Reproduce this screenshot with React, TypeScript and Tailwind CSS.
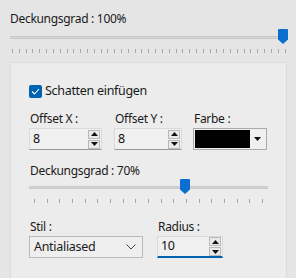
import React from "react";

function Ticks({ count }: { count: number }) {
  return (
    <div className="flex justify-between">
      {Array.from({ length: count }).map((_, i) => (
        <div key={i} className="w-px h-[4px] bg-[#a8a8a8]" />
      ))}
    </div>
  );
}

function Thumb() {
  return (
    <svg width="10" height="15" viewBox="0 0 10 15" className="block">
      <path d="M0 1 Q0 0 1 0 H9 Q10 0 10 1 V10.5 L5 15 L0 10.5 Z" fill="#0a6fcf" />
    </svg>
  );
}

function Slider({
  width,
  pct,
  tickCount,
  tickInset,
}: {
  width: number;
  pct: number;
  tickCount: number;
  tickInset: number;
}) {
  const thumbLeft = (width - 10) * pct;
  return (
    <div className="relative" style={{ width }}>
      <div className="h-[15px] flex items-center">
        <div className="w-full h-[3px] bg-[#d6d6d6] border-y border-[#c9c9c9]" />
      </div>
      <div className="absolute top-[-1px]" style={{ left: thumbLeft }}>
        <Thumb />
      </div>
      <div className="mt-[4px]" style={{ paddingLeft: tickInset, paddingRight: tickInset }}>
        <Ticks count={tickCount} />
      </div>
    </div>
  );
}

function Arrow({ up }: { up?: boolean }) {
  return (
    <svg width="7" height="4" viewBox="0 0 7 4" className="block">
      {up ? <path d="M0 4 L3.5 0 L7 4 Z" fill="#111" /> : <path d="M0 0 L3.5 4 L7 0 Z" fill="#111" />}
    </svg>
  );
}

function SpinBox({ width, value, focused }: { width: number; value: string; focused?: boolean }) {
  return (
    <div
      className={
        "relative flex items-center h-[22px] bg-[#f0f0f0] border border-[#dadada] " +
        (focused ? "border-b-2 border-b-[#0063b1]" : "border-b-[#9a9a9a]")
      }
      style={{ width }}
    >
      <span className="pl-[3px] text-[#111] text-[12.5px] leading-none">{value}</span>
      <div className="ml-auto mr-[1px] flex flex-col gap-[1px]">
        <div className="w-[12px] h-[9px] bg-[#e9e9e9] border border-[#b9b9b9] flex items-center justify-center">
          <Arrow up />
        </div>
        <div className="w-[12px] h-[9px] bg-[#e9e9e9] border border-[#b9b9b9] flex items-center justify-center">
          <Arrow />
        </div>
      </div>
    </div>
  );
}

export default function App() {
  return (
    <div
      className="w-[296px] h-[278px] overflow-hidden bg-[#e5e5e5] text-[#1a1a1a] text-[12px] tracking-[-0.3px]"
      style={{ fontFamily: '"Noto Sans", "Open Sans", sans-serif' }}
    >
      <div className="pl-[10px] pt-[11px]">
        <div className="h-[16px] leading-[16px]">Deckungsgrad : 100%</div>
        <div className="mt-[3px]">
          <Slider width={278} pct={1} tickCount={41} tickInset={2} />
        </div>
      </div>
      <div className="ml-[10px] mt-[9px] w-[277px] h-[230px] bg-[#ececec] border border-[#dcdcdc] pl-[18px] pt-[21px]">
        <label className="flex items-center gap-[3px] h-[15px]">
          <span className="w-[13px] h-[13px] rounded-[2px] bg-[#0063b1] flex items-center justify-center">
            <svg width="9" height="7" viewBox="0 0 9 7">
              <path d="M1 3.5 L3.5 6 L8 1" stroke="#fff" strokeWidth="1.1" fill="none" />
            </svg>
          </span>
          <span className="text-[12.5px] leading-none">Schatten einfügen</span>
        </label>
        <div className="flex mt-[12px]">
          <div className="w-[85px]">
            <div className="h-[16px] leading-[16px] pl-[1px]">Offset X :</div>
            <div className="mt-[1px]">
              <SpinBox width={73} value="8" />
            </div>
          </div>
          <div className="w-[79px]">
            <div className="h-[16px] leading-[16px] pl-[1px]">Offset Y :</div>
            <div className="mt-[1px]">
              <SpinBox width={68} value="8" />
            </div>
          </div>
          <div>
            <div className="h-[16px] leading-[16px] pl-[1px]">Farbe :</div>
            <div className="mt-[1px] w-[74px] h-[22px] border border-[#a9a9a9] bg-[#f0f0f0] flex items-center p-[1px]">
              <div className="w-[55px] h-full bg-black" />
              <div className="flex-1 flex items-center justify-center">
                <Arrow />
              </div>
            </div>
          </div>
        </div>
        <div className="mt-[13px] h-[15px] leading-[16px] overflow-hidden pl-[1px]">Deckungsgrad : 70%</div>
        <div className="mt-[2px]">
          <Slider width={239} pct={0.66} tickCount={19} tickInset={5} />
        </div>
        <div className="flex mt-[16px]">
          <div className="w-[128px]">
            <div className="h-[16px] leading-[16px] pl-[1px]">Stil :</div>
            <div className="mt-[1px] w-[114px] h-[22px] border border-[#b9b9b9] bg-[#efefef] flex items-center pl-[4px] pr-[6px]">
              <span className="text-[12.5px] leading-none">Antialiased</span>
              <svg width="10" height="6" viewBox="0 0 10 6" className="ml-auto">
                <path d="M0.5 0.5 L5 5 L9.5 0.5" stroke="#444" strokeWidth="1" fill="none" />
              </svg>
            </div>
          </div>
          <div>
            <div className="h-[16px] leading-[16px] pl-[1px]">Radius :</div>
            <div className="mt-[1px]">
              <SpinBox width={66} value="10" focused />
            </div>
          </div>
        </div>
      </div>
    </div>
  );
}
